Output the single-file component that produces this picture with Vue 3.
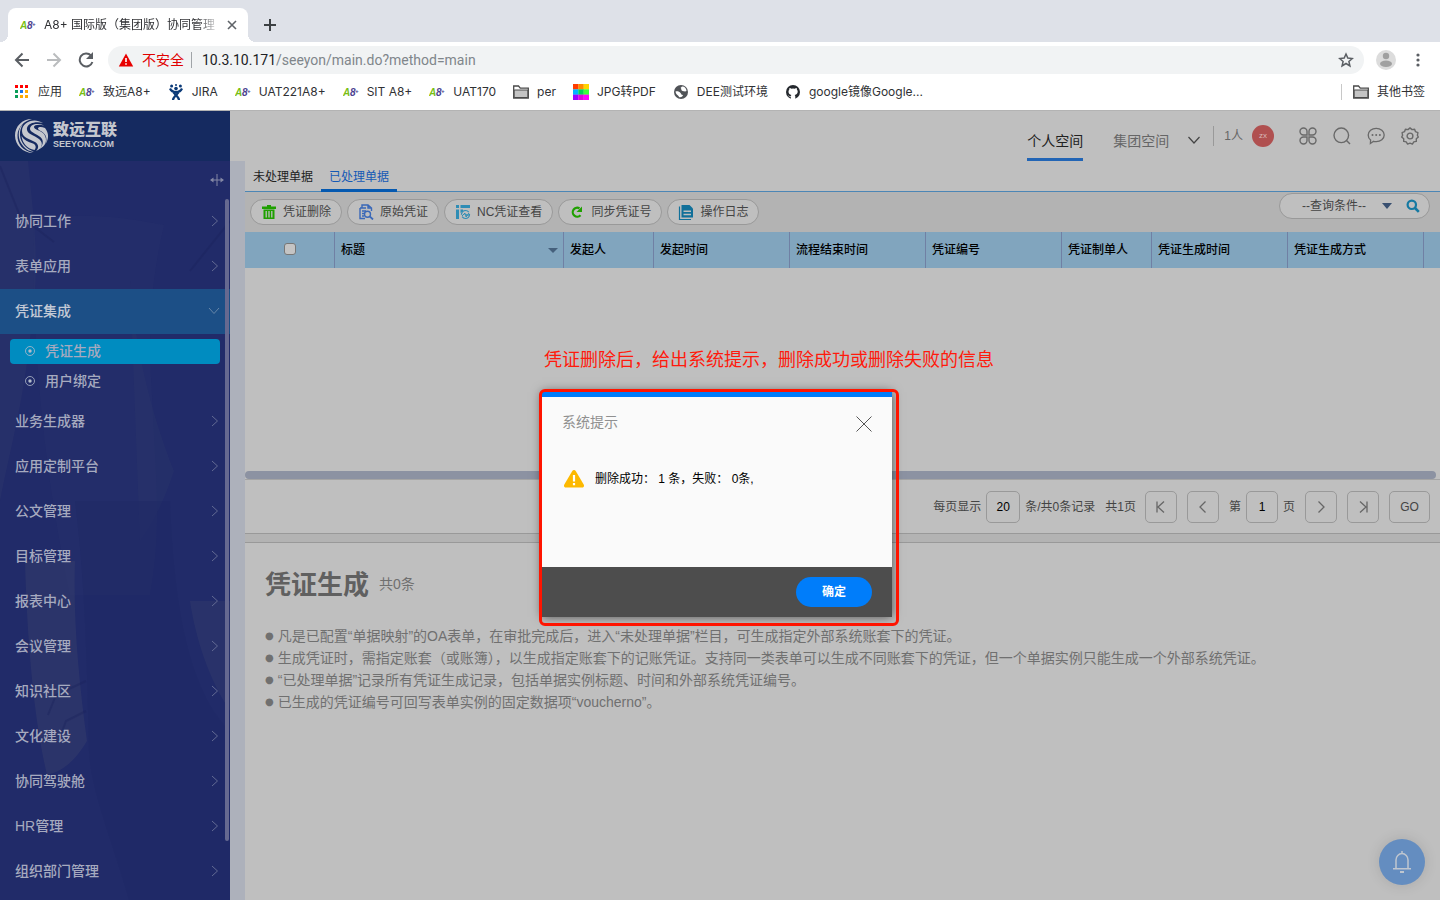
<script setup>
import { ref } from 'vue'

const bookmarks = [
  { icon: 'apps', label: '应用' },
  { icon: 'a8', label: '致远A8+' },
  { icon: 'jira', label: 'JIRA' },
  { icon: 'a8', label: 'UAT221A8+' },
  { icon: 'a8', label: 'SIT A8+' },
  { icon: 'a8', label: 'UAT170' },
  { icon: 'folder', label: 'per' },
  { icon: 'palette', label: 'JPG转PDF' },
  { icon: 'globe', label: 'DEE测试环境' },
  { icon: 'github', label: 'google镜像Google...' },
]
const appDots = ['#f00', '#f00', '#f00', '#0a9d58', '#1a73e8', '#fa0', '#0a9d58', '#fa0', '#fa0']
const swatches = ['#ff3c00', '#ff8a00', '#ffd400', '#00b4ff', '#00d45a', '#3cff3c', '#9a00ff', '#e000e0', '#ff00ff']

const menu = [
  { label: '协同工作' },
  { label: '表单应用' },
  { label: '凭证集成', children: ['凭证生成', '用户绑定'] },
  { label: '业务生成器' },
  { label: '应用定制平台' },
  { label: '公文管理' },
  { label: '目标管理' },
  { label: '报表中心' },
  { label: '会议管理' },
  { label: '知识社区' },
  { label: '文化建设' },
  { label: '协同驾驶舱' },
  { label: 'HR管理' },
  { label: '组织部门管理' },
]
const actions = [
  { icon: 'trash', label: '凭证删除' },
  { icon: 'doc', label: '原始凭证' },
  { icon: 'nc', label: 'NC凭证查看' },
  { icon: 'sync', label: '同步凭证号' },
  { icon: 'log', label: '操作日志' },
]
const columns = ['发起人', '发起时间', '流程结束时间', '凭证编号', '凭证制单人', '凭证生成时间', '凭证生成方式']
const notes = [
  '凡是已配置“单据映射”的OA表单，在审批完成后，进入“未处理单据”栏目，可生成指定外部系统账套下的凭证。',
  '生成凭证时，需指定账套（或账簿），以生成指定账套下的记账凭证。支持同一类表单可以生成不同账套下的凭证，但一个单据实例只能生成一个外部系统凭证。',
  '“已处理单据”记录所有凭证生成记录，包括单据实例标题、时间和外部系统凭证编号。',
  '已生成的凭证编号可回写表单实例的固定数据项“voucherno”。',
]
const url = ref('/seeyon/main.do?method=main')
const pageSize = ref('20')
const pageNo = ref('1')
</script>

<template>
  <div class="window">
    <header class="chrome">
      <div class="tabstrip">
        <div class="tab">
          <svg class="a8" width="16" height="16" viewBox="0 0 16 16"><text x="0" y="12" class="a8-a">A</text><text x="7" y="12" class="a8-b">8</text><text x="12" y="9" class="a8-c">+</text></svg>
          <span class="tab-title">A8+ 国际版（集团版）协同管理</span>
          <button class="plain" aria-label="关闭标签页"><svg width="10" height="10" viewBox="0 0 10 10" fill="none" stroke="#5f6368" stroke-width="1.6"><path d="M1 1l8 8M9 1L1 9" /></svg></button>
        </div>
        <button class="plain newtab" aria-label="新标签页"><svg width="12" height="12" viewBox="0 0 12 12" stroke="#3c4043" stroke-width="2"><path d="M6 0v12M0 6h12" /></svg></button>
      </div>
      <div class="navbar">
        <button class="plain" aria-label="后退"><svg width="16" height="16" viewBox="0 0 16 16" fill="none" stroke="#5a5e63" stroke-width="2"><path d="M15 8H2M8.500 1.500L2 8l6.500 6.500" /></svg></button>
        <button class="plain" aria-label="前进"><svg width="16" height="16" viewBox="0 0 16 16" fill="none" stroke="#babcbe" stroke-width="2"><path d="M1 8h13M7.500 1.500L14 8l-6.500 6.500" /></svg></button>
        <button class="plain" aria-label="刷新"><svg width="16" height="16" viewBox="0 0 16 16"><path d="M13 3.500A6.500 6.500 0 1 0 14.400 10" fill="none" stroke="#5a5e63" stroke-width="2" /><path d="M15 0v7H8z" fill="#5a5e63" /></svg></button>
        <div class="omnibox">
          <svg width="16" height="14" viewBox="0 0 16 14"><path d="M8 0.500L15.200 13.500H.8z" fill="#e80000" /><path d="M8 5v4M8 10.200v1.600" stroke="#fff" stroke-width="1.600" /></svg>
          <span class="unsafe">不安全</span>
          <i class="bar"></i>
          <span class="host">10.3.10.171</span>
          <input class="url" v-model="url" aria-label="地址栏" />
          <button class="plain" aria-label="收藏"><svg width="16" height="16" viewBox="0 0 16 16" fill="none" stroke="#5a5e63" stroke-width="1.500"><path d="M8 2l1.800 4.100 4.500.4-3.400 3 1 4.400L8 11.500l-3.900 2.400 1-4.400-3.400-3 4.500-.4z" /></svg></button>
        </div>
        <svg class="avatar" width="20" height="20" viewBox="0 0 20 20"><circle cx="10" cy="10" r="10" fill="#dcdcdc" /><circle cx="10" cy="6" r="3.200" fill="#a0a0a0" /><ellipse cx="10" cy="13.800" rx="6" ry="3.200" fill="#a0a0a0" /></svg>
        <button class="plain" aria-label="菜单"><svg width="4" height="14" viewBox="0 0 4 14" fill="#5a5e63"><circle cx="2" cy="2" r="1.600" /><circle cx="2" cy="7" r="1.600" /><circle cx="2" cy="12" r="1.600" /></svg></button>
      </div>
      <nav class="bookmarks">
        <a v-for="b in bookmarks" :key="b.label" href="#">
          <svg v-if="b.icon === 'apps'" width="16" height="16" viewBox="0 0 16 16"><rect v-for="(c, i) in appDots" :key="i" :x="1 + (i % 3) * 5" :y="1 + Math.floor(i / 3) * 5" width="3" height="3" :fill="c" /></svg>
          <svg v-else-if="b.icon === 'a8'" class="a8" width="16" height="16" viewBox="0 0 16 16"><text x="0" y="12" class="a8-a">A</text><text x="7" y="12" class="a8-b">8</text><text x="12" y="9" class="a8-c">+</text></svg>
          <svg v-else-if="b.icon === 'jira'" width="16" height="16" viewBox="0 0 16 16" fill="none" stroke="#0b3a78" stroke-width="2.200"><path d="M2 4.500c1 2.500 3 3.500 6 3.500s5-1 6-3.500M5 7c0 3 6 5 6 9M11 7c0 3-6 5-6 9" /><g fill="#0b3a78" stroke="none"><circle cx="8" cy="4.600" r="1.800" /><circle cx="3.600" cy="1.900" r="1.500" /><circle cx="8" cy="1.100" r="1" /><circle cx="12.400" cy="1.900" r="1.500" /></g></svg>
          <svg v-else-if="b.icon === 'folder'" width="16" height="14" viewBox="0 0 16 14"><path d="M.7 13V1h4.800l1.800 2.200h8V13z" fill="#fff" stroke="#4a4a4a" stroke-width="1.300" /><path d="M1.200 5h13.600v7.500H1.200z" fill="#c4c4c4" stroke="#4a4a4a" /></svg>
          <svg v-else-if="b.icon === 'palette'" width="16" height="16" viewBox="0 0 16 16"><rect v-for="(c, i) in swatches" :key="i" :x="(i % 3) * 5.33" :y="Math.floor(i / 3) * 5.33" width="5.500" height="5.500" :fill="c" /></svg>
          <svg v-else-if="b.icon === 'globe'" width="16" height="16" viewBox="0 0 16 16"><circle cx="8" cy="8" r="7" fill="#505357" /><path d="M9 2.500c2-.5 4.500 1.500 4.500 4.500-1.500 1-2.500 0-4 0C7.500 6 9 4.500 7.500 4zM2.500 7.500c2-.5 4 .2 5 1.500 1 1 .5 2 2.500 2-.5 2-2.500 2.500-4 2 0-1.500-3-2-3.500-5.500z" fill="#fff" /></svg>
          <svg v-else width="16" height="16" viewBox="0 0 16 16"><circle cx="8" cy="8" r="7" fill="#25292e" /><path d="M5.800 15v-2.300C4 13 3.600 12 3 11.400c.9 0 1.300 1 2.800.7.100-.6.400-1 .6-1.200C4.300 10.600 3.500 9.500 3.500 7.600c0-.8.300-1.500.8-2 0-.6 0-1.200.2-1.700.8 0 1.500.5 2 .9a7 7 0 0 1 3.200 0c.5-.4 1.200-.9 2-.9.200.5.200 1.100.2 1.700.5.500.8 1.200.8 2 0 1.900-.9 3-3 3.300.4.400.6 1 .6 1.600V15z" fill="#fff" /></svg>
          <span>{{ b.label }}</span>
        </a>
        <a href="#" class="other">
          <svg width="16" height="14" viewBox="0 0 16 14"><path d="M.7 13V1h4.800l1.800 2.200h8V13z" fill="#fff" stroke="#4a4a4a" stroke-width="1.300" /><path d="M1.200 5h13.600v7.500H1.200z" fill="#c4c4c4" stroke="#4a4a4a" /></svg>
          <span>其他书签</span>
        </a>
      </nav>
    </header>

    <div class="app">
      <aside class="sidebar">
        <div class="brand">
          <svg width="36" height="36" viewBox="0 0 36 36" fill="#c4c7ce"><path d="M29 5C20-1 8 4 8 13c0 7 8 8 13 11 4 2.500 4 6 1 9 6-2 8-8 3-12C20 17 12 16 13 10c1-5 9-7 16-5z" /><path d="M30 7.500c-7-3-14-1-14 3.500 0 4 9 5 12 10 2 4 0 8-4 10.500C32 29 34 22 30 16c-3-4-10-4-10-7 0-2 5-3 10-1.500z" /><path d="M31 10c-4-1.500-7-1-7 .5 0 2 5 2.500 7.500 7 1.500 3 1 6 0 8.500C35 21 35 15 31 10z" /><path d="M18 1C8 1 1 8.500 1 17.500 1 27 9 35 19 35 9 33 3 26 3.500 17 4 9 10 3 18 1z" /><path d="M9 6C4 10 3.500 19 7 25s8 8.500 13 8.500C12 31 6.500 25 6 17c-.3-4 1-8 3-11z" /><path d="M7.500 18c1 7 5 12.500 13 14 2-2.500 1.500-5-1.500-6.500-5-1.500-9-3.500-11.500-7.500z" /></svg>
          <div class="brand-text"><strong>致远互联</strong><span>SEEYON.COM</span></div>
        </div>
        <div class="side-body">
          <svg class="forest" viewBox="0 0 230 739" preserveAspectRatio="none" aria-hidden="true">
            <path d="M0 0h28c6 60 12 100 4 160-8 80-20 120-32 180z" fill="#303a6d" opacity=".35" />
            <path d="M34 60c40-10 90-4 130 4-14 60-16 110-12 170 4 90 10 130-2 200H70C50 340 30 200 34 60z" fill="#2e386d" opacity=".2" />
            <path d="M130 120c4 60 20 130 44 190-10 30-20 50-34 70z" fill="#303a6d" opacity=".25" />
            <path d="M25 400h50c-2 60 4 120 12 180-12 20-24 30-40 34-14-60-20-140-22-214z" fill="#363e6c" opacity=".5" />
            <path d="M190 440h40v110c-20-30-34-70-40-110z" fill="#363e6c" opacity=".4" />
            <path d="M75 340c10 80 12 160 14 250 2 40 20 80 40 149h101V570c-40-40-56-120-60-230z" fill="#1f2865" opacity=".4" />
            <path d="M0 5l20 50 34 26M230 60l-40 50M86 520l-30 14-8 20M86 550l-20 10-6 16" fill="none" stroke="#1c245c" stroke-width="2" opacity=".4" />
          </svg>
          <div class="collapse"><button class="plain" aria-label="收起菜单"><svg width="14" height="14" viewBox="0 0 14 14" fill="#8488a5"><path d="M6.500 1h1v12h-1zM1 6.500h12v1H1z" /><path d="M0 7l3.500-2.500v5zM14 7l-3.500-2.500v5z" /></svg></button></div>
          <ul class="menu">
            <li v-for="m in menu" :key="m.label">
              <a href="#" class="menu-item" :class="{ open: m.children }">
                <span>{{ m.label }}</span>
                <svg v-if="m.children" width="12" height="12" viewBox="0 0 12 12" fill="none" stroke="#6686a8"><path d="M1 3l5 5.500L11 3" /></svg>
                <svg v-else width="12" height="12" viewBox="0 0 12 12" fill="none" stroke="#626a93"><path d="M4 1l5.500 5L4 11" /></svg>
              </a>
              <div v-if="m.children" class="submenu">
                <a v-for="(c, i) in m.children" :key="c" href="#" :class="{ current: i === 0 }">
                  <svg width="10" height="10" viewBox="0 0 10 10"><circle cx="5" cy="5" r="4.500" fill="none" stroke="#b4bccb" stroke-width=".8" /><circle cx="5" cy="5" r="1.700" fill="#b4bccb" /></svg><span>{{ c }}</span>
                </a>
              </div>
            </li>
          </ul>
          <i class="side-scroll"></i>
        </div>
      </aside>

      <section class="main">
        <div class="topbar">
          <a href="#" class="space on">个人空间</a>
          <a href="#" class="space second">集团空间</a>
          <button class="plain chev" aria-label="更多空间"><svg width="12" height="8" viewBox="0 0 12 8" fill="none" stroke="#444" stroke-width="1.200"><path d="M.5 1L6 7l5.500-6" /></svg></button>
          <i class="divider"></i>
          <span class="online">1人</span>
          <span class="user">zx</span>
          <div class="tools">
            <button class="plain" aria-label="应用"><svg width="18" height="18" viewBox="0 0 18 18" fill="none" stroke="#696969" stroke-width="1.400"><path d="M8 8H4.500A3.500 3.500 0 1 1 8 4.500zM10 8V4.500A3.500 3.500 0 1 1 13.500 8zM8 10v3.500A3.500 3.500 0 1 1 4.500 10zM10 10h3.500A3.500 3.500 0 1 1 10 13.500z" /></svg></button>
            <button class="plain" aria-label="搜索"><svg width="18" height="18" viewBox="0 0 18 18" fill="none" stroke="#696969" stroke-width="1.400"><circle cx="8.300" cy="8.300" r="7.300" /><path d="M13.500 13.500L17 17" /></svg></button>
            <button class="plain" aria-label="消息"><svg width="18" height="18" viewBox="0 0 18 18"><path d="M9.200 1.300c4.400 0 8 3 8 6.700s-3.600 6.700-8 6.700c-.9 0-1.800-.1-2.600-.4L3.400 16.500l.2-3.400C2 11.900 1.200 10 1.200 8c0-3.700 3.600-6.700 8-6.700z" fill="none" stroke="#696969" stroke-width="1.300" /><g fill="#696969"><circle cx="5.500" cy="8" r="1" /><circle cx="9.200" cy="8" r="1" /><circle cx="12.900" cy="8" r="1" /></g></svg></button>
            <button class="plain" aria-label="设置"><svg width="18" height="18" viewBox="0 0 18 18" fill="none" stroke="#696969" stroke-width="1.400" stroke-linejoin="round"><circle cx="9" cy="9" r="2.900" /><path d="M7 2.600L9 .9l2 1.700 2.600-.4.900 2.500 2.400 1-.5 2.600L17.300 10l-2 1.800v2.600l-2.500.5-1.400 2.200L9 16.200l-2.400.9-1.400-2.200-2.500-.5v-2.600L.7 10l.9-1.700-.5-2.600 2.400-1 .9-2.500z" /></svg></button>
          </div>
        </div>

        <div class="workspace">
          <nav class="tabs">
            <a href="#">未处理单据</a>
            <a href="#" class="on">已处理单据</a>
          </nav>
          <div class="toolbar">
            <button v-for="a in actions" :key="a.label" class="pill">
              <svg v-if="a.icon === 'trash'" width="16" height="16" viewBox="0 0 16 16" fill="#1fa000"><path d="M6 1h4v1.500h5V5H1V2.500h5zM2.500 5.500h11V15h-11z" /><path d="M5.200 7v6.500M8 7v6.500M10.800 7v6.500" stroke="#bfbfbf" stroke-width="1.300" /></svg>
              <svg v-else-if="a.icon === 'doc'" width="16" height="16" viewBox="0 0 16 16" fill="none" stroke="#3a68b8" stroke-width="1.400"><path d="M4 4V1h6l3.500 3v3M2 4h6M2 4v10.500h5M4 7h4M4 9.500h2M4 12h2M10 1v3h3.500" /><circle cx="9.500" cy="10.200" r="3" /><path d="M11.700 12.400L15 15.500" stroke-width="1.800" /></svg>
              <svg v-else-if="a.icon === 'nc'" width="16" height="16" viewBox="0 0 16 16" fill="#2f8db5"><path d="M1 1h3v3H1zM5.500 1H15v3H5.500zM1 5.500h3V15H1z" /><circle cx="10.500" cy="10.500" r="4" fill="none" stroke="#2f8db5" stroke-width="1.200" stroke-dasharray="10 2" /><path d="M7 12l3-3v2h4M14 9l-3 4v-3" fill="none" stroke="#2f8db5" /><path d="M5.500 5.500H8V7L5.500 9z" /></svg>
              <svg v-else-if="a.icon === 'sync'" width="16" height="16" viewBox="0 0 16 16"><path d="M10.500 4.300A4.500 4.500 0 1 0 11.500 11.300" fill="none" stroke="#1fa000" stroke-width="2.200" /><path d="M13 2.500v5.500H7.500z" fill="#1fa000" /></svg>
              <svg v-else width="16" height="16" viewBox="0 0 16 16"><path d="M3.500 1h8L15 4.500v9H3.500z" fill="#11709a" /><path d="M1.500 2.500v13H13" fill="none" stroke="#11709a" stroke-width="1.200" /><path d="M5.500 7.200h7.500M5.500 10.500h7.500" stroke="#bfbfbf" stroke-width="1.400" /></svg>
              <span>{{ a.label }}</span>
            </button>
            <div class="query">
              <select aria-label="查询条件"><option>--查询条件--</option></select>
              <svg width="10" height="6" viewBox="0 0 10 6"><path d="M0 0h10L5 6z" fill="#384f70" /></svg>
              <button class="plain" aria-label="查询"><svg width="14" height="14" viewBox="0 0 14 14" fill="none" stroke="#1479a2" stroke-width="2.200"><circle cx="5.800" cy="5.800" r="4.200" /><path d="M9 9l3.800 3.800" stroke-width="2.600" /></svg></button>
            </div>
          </div>

          <div class="grid-area">
            <table>
              <colgroup><col class="w90" /><col class="w229" /><col class="w90" /><col class="w136" /><col class="w136" /><col class="w136" /><col class="w90" /><col class="w136" /><col class="w136" /><col /></colgroup>
              <thead>
                <tr>
                  <th class="check"><input type="checkbox" aria-label="全选" /></th>
                  <th><div class="sortable">标题<svg width="10" height="6" viewBox="0 0 10 6"><path d="M0 1h10L5 6z" fill="#45607c" /></svg></div></th>
                  <th v-for="c in columns" :key="c">{{ c }}</th>
                  <th></th>
                </tr>
              </thead>
            </table>
            <p class="annotation">凭证删除后，给出系统提示，删除成功或删除失败的信息</p>
          </div>
          <div class="hscroll"><i></i></div>

          <div class="pager">
            <label for="size">每页显示</label>
            <input id="size" class="size" v-model="pageSize" />
            <span>条/共0条记录</span>
            <span class="total">共1页</span>
            <button class="box" aria-label="首页"><svg width="14" height="14" viewBox="0 0 14 14" fill="none" stroke="#666" stroke-width="1.300"><path d="M3 1.500v11M10 1.500L4 7l6 5.500" /></svg></button>
            <button class="box" aria-label="上一页"><svg width="14" height="14" viewBox="0 0 14 14" fill="none" stroke="#666" stroke-width="1.300"><path d="M9.500 1.500L4 7l5.500 5.500" /></svg></button>
            <label for="no">第</label>
            <input id="no" class="no" v-model="pageNo" />
            <span>页</span>
            <button class="box after" aria-label="下一页"><svg width="14" height="14" viewBox="0 0 14 14" fill="none" stroke="#666" stroke-width="1.300"><path d="M4.500 1.500L10 7l-5.500 5.500" /></svg></button>
            <button class="box" aria-label="末页"><svg width="14" height="14" viewBox="0 0 14 14" fill="none" stroke="#666" stroke-width="1.300"><path d="M11 1.500v11M4 1.500L10 7l-6 5.500" /></svg></button>
            <button class="box go">GO</button>
          </div>
          <div class="splitter"></div>

          <div class="detail">
            <div class="heading"><h1>凭证生成</h1><span>共0条</span></div>
            <ul><li v-for="n in notes" :key="n"><span class="dot">●</span><span>{{ n }}</span></li></ul>
          </div>
        </div>
      </section>
    </div>

    <div class="modal-layer">
      <div class="highlight">
        <div class="dialog" role="dialog" aria-label="系统提示">
          <div class="dialog-head">
            <span>系统提示</span>
            <button class="plain" aria-label="关闭"><svg width="16" height="16" viewBox="0 0 16 16" stroke="#555"><path d="M.5.500l15 15M15.500.500l-15 15" /></svg></button>
          </div>
          <div class="dialog-body">
            <svg width="22" height="18" viewBox="0 0 22 18"><path d="M9.300 1a2 2 0 0 1 3.400 0l8 13.500c.8 1.500 0 3-1.600 3H2.900c-1.600 0-2.400-1.500-1.600-3z" fill="#fdb900" /><path d="M9.900 5h2.200v6.500H9.900zM9.900 13h2.200v2.200H9.900z" fill="#fff" /></svg>
            <span>删除成功： 1 条，失败： 0条,</span>
          </div>
          <div class="dialog-foot"><button>确定</button></div>
        </div>
      </div>
    </div>

    <button class="bell" aria-label="通知"><svg width="20" height="24" viewBox="0 0 20 24" fill="none" stroke="#bfc6cf" stroke-width="1.500"><path d="M4 18V10a6 6.500 0 0 1 12 0v8M1 18.700h18M10 1v2.500" /><path d="M8 22h4" stroke-width="2" /></svg></button>
  </div>
</template>

<style>
html, body { margin: 0; background: #bfbfbf; }
</style>

<style scoped>
* { box-sizing: border-box; }
.window { position: relative; display: flex; flex-direction: column; height: 100vh; overflow: hidden; font-family: "Liberation Sans", "Noto Sans CJK SC", sans-serif; font-size: 12px; line-height: 18px; background: #bfbfbf; }
a { color: inherit; text-decoration: none; }
button, input, select { font: inherit; color: inherit; }
svg { flex: none; display: block; }
ul, p, h1 { margin: 0; padding: 0; list-style: none; }
.plain { display: flex; align-items: center; justify-content: center; padding: 0; border: 0; background: none; }

.chrome { flex: none; font-family: Inter, "Noto Sans CJK SC", sans-serif; color: #303134; background: #fff; border-bottom: 1px solid #b3b3b3; }
.tabstrip { display: flex; height: 42px; padding: 8px 8px 0; background: #dee1e8; }
.tab { position: relative; display: flex; align-items: center; width: 240px; padding: 0 11px 0 12px; background: #fff; border-radius: 8px 8px 0 0; }
.tab::before, .tab::after { content: ""; position: absolute; bottom: 0; width: 8px; height: 8px; }
.tab::before { left: -8px; background: radial-gradient(circle at 0 0, transparent 8px, #fff 8px); }
.tab::after { right: -8px; background: radial-gradient(circle at 100% 0, transparent 8px, #fff 8px); }
.tab-title { flex: 1; margin: 0 6px 0 8px; overflow: hidden; white-space: nowrap; -webkit-mask-image: linear-gradient(90deg, #000 86%, transparent); mask-image: linear-gradient(90deg, #000 86%, transparent); }
.newtab { width: 28px; margin-left: 8px; }
.a8 { font-family: "Liberation Sans", sans-serif; font-weight: bold; font-style: italic; }
.a8-a { font-size: 10px; fill: #78be14; }
.a8-b { font-size: 10px; fill: #4a4090; }
.a8-c { font-size: 6px; fill: #4a4090; }
.navbar { display: flex; align-items: center; gap: 16px; height: 36px; padding: 0 20px 0 14px; }
.omnibox { flex: 1; display: flex; align-items: center; height: 28px; margin-left: -2px; padding: 0 10px; font-family: Roboto, "Noto Sans CJK SC", sans-serif; font-size: 14px; background: #f1f3f4; border-radius: 14px; }
.avatar { margin: 0 4px 0 -4px; }
.unsafe { margin-left: 8px; color: #e00000; }
.bar { width: 1px; height: 16px; margin: 0 10px 0 7px; background: #a0a4a8; }
.host { color: #202124; }
.url { flex: 1; min-width: 0; padding: 0; border: 0; outline: 0; background: none; color: #80868b; }
.bookmarks { display: flex; align-items: center; gap: 17px; height: 32px; padding: 0 15px 4px 14px; }
.bookmarks a { display: flex; align-items: center; gap: 8px; height: 24px; white-space: nowrap; }
.bookmarks .other { position: relative; margin-left: auto; padding-left: 12px; }
.other::before { content: ""; position: absolute; left: 0; top: 4px; height: 16px; width: 1px; background: #c8c8c8; }

.app { flex: 1; display: flex; min-height: 0; }
.sidebar { flex: none; display: flex; flex-direction: column; width: 230px; color: #a6aabf; background: #212b69; }
.brand { flex: none; display: flex; align-items: center; gap: 3px; height: 50px; padding-left: 14px; background: #152a60; color: #c4c7ce; }
.brand-text { display: flex; flex-direction: column; }
.brand-text strong { font-size: 16px; line-height: 16px; font-weight: 900; }
.brand-text span { font-size: 9px; line-height: 12px; font-weight: bold; }
.side-body { position: relative; flex: 1; min-height: 0; overflow: hidden; }
.forest { position: absolute; inset: 0; width: 100%; height: 100%; }
.collapse { position: relative; display: flex; justify-content: flex-end; height: 38px; padding-right: 6px; }
.menu { position: relative; font-size: 14px; font-weight: 500; }
.menu-item { display: flex; align-items: center; justify-content: space-between; height: 45px; padding: 0 10px 2px 15px; }
.menu-item.open { background: #1c4f86; color: #c4cad6; }
.submenu { padding: 5px 10px; }
.submenu a { display: flex; align-items: center; gap: 10px; height: 25px; padding: 0 15px 1px; border-radius: 4px; }
.submenu a + a { margin-top: 5px; }
.submenu .current { background: #008cc0; }
.side-scroll { position: absolute; right: 1px; top: 38px; width: 4px; height: 642px; border-radius: 2px; background: #666990; }

.main { flex: 1; min-width: 0; display: flex; flex-direction: column; }
.topbar { flex: none; display: flex; justify-content: flex-end; align-items: center; height: 50px; padding-right: 21px; color: #666; }
.space { display: flex; align-items: center; align-self: stretch; padding-top: 12px; font-size: 14px; border-bottom: 3px solid transparent; }
.space.on { color: #222; border-color: #2265b5; }
.second { margin-left: 30px; }
.chev { margin: 8px 13px 0 19px; }
.divider { width: 1px; height: 20px; background: #999; }
.online { margin: 0 9px 0 10px; font-size: 12px; }
.user { width: 22px; height: 22px; border-radius: 50%; background: #b05050; color: #d8b8b8; font-size: 8px; line-height: 22px; text-align: center; }
.tools { display: flex; gap: 16px; margin-left: 25px; }

.workspace { flex: 1; display: flex; flex-direction: column; min-height: 0; border-left: 15px solid #adb1bb; }
.tabs { display: flex; height: 31px; border-bottom: 1px solid #4c86b5; }
.tabs a { height: 31px; padding: 0 8px; line-height: 32px; color: #222; }
.tabs .on { color: #1459b5; border-bottom: 3px solid #0559b0; }
.toolbar { display: flex; align-items: center; gap: 5px; height: 40px; padding: 0 10px 0 5px; background: #b3b3b3; }
.pill { display: flex; align-items: center; gap: 6px; height: 26px; padding: 0 10px; border: 1px solid #999; border-radius: 13px; background: #bfbfbf; color: #444; white-space: nowrap; }
.query { display: flex; align-items: center; height: 26px; margin: -12px 0 0 auto; padding: 0 9px 0 22px; border: 1px solid #999; border-radius: 13px; background: #bfbfbf; color: #444; }
.query select { appearance: none; width: 80px; padding: 0; border: 0; background: none; }
.query .plain { margin-left: 14px; }
.grid-area { height: 239px; }
table { width: 100%; table-layout: fixed; border-collapse: separate; border-spacing: 0; background: #81a5be; }
th { height: 36px; padding: 0 6px; border-right: 1px solid #7080a4; text-align: left; color: #000; font-weight: 500; }
th:last-child { border: 0; padding: 0; }
.w90 { width: 90px; }
.w229 { width: 229px; }
.w136 { width: 136px; }
.check { text-align: center; }
.check input { appearance: none; display: block; width: 12px; height: 12px; margin: -2px auto 0; border: 1px solid #777; border-radius: 3px; background: #c4c4c4; }
.sortable { display: flex; align-items: center; justify-content: space-between; margin-right: -1px; }
.annotation { padding: 79px 0 0 299px; font-size: 18px; line-height: 26px; color: #ff1a0c; white-space: nowrap; }
.hscroll { height: 9px; padding-right: 4px; border-bottom: 1px solid #a4a4a4; }
.hscroll i { display: block; height: 8px; border-radius: 4px; background: #8c92a2; }
.pager { display: flex; align-items: center; justify-content: flex-end; gap: 5px; height: 53px; padding-right: 10px; color: #444; white-space: nowrap; }
.pager input { height: 32px; padding: 0; border: 1px solid #999; border-radius: 5px; background: none; text-align: center; color: #000; }
.size { width: 34px; }
.no { width: 32px; }
.total { margin: 0 4px 0 5px; }
.box { display: flex; align-items: center; justify-content: center; width: 32px; height: 32px; margin-right: 5px; padding: 0; border: 1px solid #999; border-radius: 5px; background: none; }
.after { margin-left: 5px; }
.go { width: 41px; margin-right: 0; }
.splitter { height: 10px; border-top: 1px solid #999; border-bottom: 1px solid #999; background: #b3b3b3; }
.detail { padding: 22px 20px; font-size: 14px; line-height: 22px; color: #707070; }
.heading { display: flex; align-items: center; gap: 10px; height: 40px; }
.heading h1 { font-size: 26px; line-height: 40px; font-weight: bold; color: #606060; }
.heading span { padding-bottom: 2px; }
.detail ul { margin-top: 20px; }
.detail li { display: flex; align-items: center; gap: 4px; height: 22px; white-space: nowrap; }
.dot { font-family: "DejaVu Sans", sans-serif; font-size: 10px; }

.modal-layer { position: absolute; top: 389px; left: 50%; margin-left: -181px; }
.highlight { position: relative; padding: 3px 7px 9px 3px; }
.highlight::after { content: ""; position: absolute; inset: 0; border: 3px solid #ff1400; border-radius: 6px; pointer-events: none; }
.dialog { width: 350px; border-top: 5px solid #007dfa; background: #fafafa; box-shadow: 0 0 10px rgba(0, 0, 0, .6); }
.dialog-head { display: flex; justify-content: space-between; align-items: center; height: 51px; padding: 0 20px; font-size: 14px; color: #909090; }
.dialog-head span { padding-bottom: 2px; }
.dialog-head .plain { padding-top: 2px; }
.dialog-body { display: flex; gap: 10px; align-items: flex-start; height: 119px; padding: 22px 20px 0 21px; color: #000; white-space: pre; }
.dialog-foot { display: flex; align-items: center; justify-content: flex-end; height: 50px; padding-right: 20px; background: #4d4d4d; }
.dialog-foot button { width: 76px; height: 30px; border: 0; border-radius: 15px; background: #007dfa; color: #fff; font-weight: bold; }
.bell { position: absolute; right: 15px; bottom: 15px; display: flex; align-items: center; justify-content: center; width: 46px; height: 46px; padding: 0; border: 0; border-radius: 50%; background: #648dc0; box-shadow: 0 0 14px rgba(0, 0, 0, .12); }
</style>
